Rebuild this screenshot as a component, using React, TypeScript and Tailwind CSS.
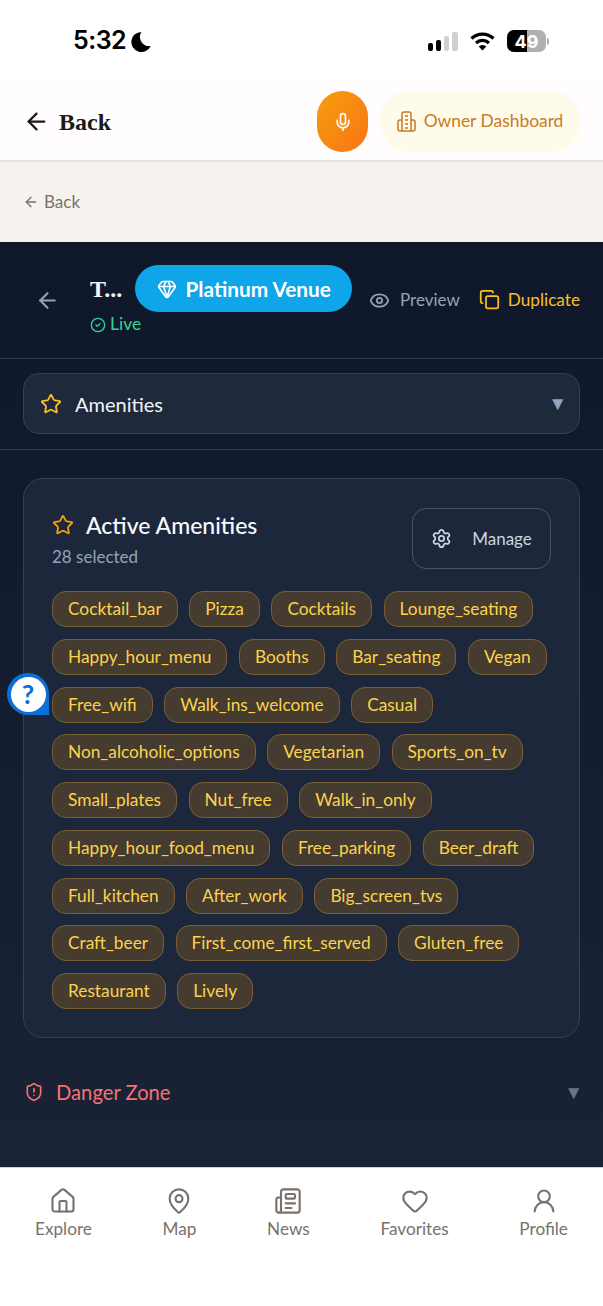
import { ArrowLeft, Mic, Gem, CircleCheck, Eye, Copy, Star, Settings, ShieldAlert, House, MapPin, Newspaper, Heart, UserRound } from 'lucide-react';

const amenities = [
  'Cocktail_bar', 'Pizza', 'Cocktails', 'Lounge_seating', 'Happy_hour_menu', 'Booths', 'Bar_seating', 'Vegan',
  'Free_wifi', 'Walk_ins_welcome', 'Casual', 'Non_alcoholic_options', 'Vegetarian', 'Sports_on_tv',
  'Small_plates', 'Nut_free', 'Walk_in_only', 'Happy_hour_food_menu', 'Free_parking', 'Beer_draft',
  'Full_kitchen', 'After_work', 'Big_screen_tvs', 'Craft_beer', 'First_come_first_served', 'Gluten_free',
  'Restaurant', 'Lively',
];

const navItems = [
  { label: 'Explore', icon: House },
  { label: 'Map', icon: MapPin },
  { label: 'News', icon: Newspaper },
  { label: 'Favorites', icon: Heart },
  { label: 'Profile', icon: UserRound },
];

function StatusBar() {
  return (
    <div className="h-[81px] bg-white flex items-center justify-between pl-[73px] pr-[54px] pt-[1px] font-['Inter',sans-serif]">
      <div className="flex items-center gap-[4px]">
        <span className="text-[25px] font-semibold text-black tracking-[-0.5px]">5:32</span>
        <svg width="21" height="21" viewBox="0 0 24 24" fill="#000">
          <path d="M13 1a11.5 11.5 0 1 0 10.6 16A10.5 10.5 0 0 1 13 1z" />
        </svg>
      </div>
      <div className="flex items-center gap-[11px]">
        <div className="flex items-end gap-[3px] h-[19px]">
          <div className="w-[5px] h-[8px] rounded-[2px] bg-black" />
          <div className="w-[5px] h-[11px] rounded-[2px] bg-black" />
          <div className="w-[5px] h-[15px] rounded-[2px] bg-[#d0d0d0]" />
          <div className="w-[6px] h-[19px] rounded-[2px] bg-[#d0d0d0]" />
        </div>
        <svg width="27" height="20" viewBox="0 0 26 20" fill="none" stroke="#000" strokeWidth="3.2">
          <path d="M2 7.5a16 16 0 0 1 22 0" />
          <path d="M6.5 12a9.5 9.5 0 0 1 13 0" />
          <path d="M13 19.5l-3.8-4a5.4 5.4 0 0 1 7.6 0z" fill="#000" stroke="none" />
        </svg>
        <div className="flex items-center gap-[1px]">
          <div className="relative w-[39px] h-[22px] rounded-[7px] bg-[#b0b0b0] overflow-hidden flex items-center justify-center">
            <div className="absolute left-0 top-0 bottom-0 w-[20px] bg-black" />
            <span className="relative text-[18px] font-bold text-white">49</span>
          </div>
          <div className="w-[2px] h-[7px] rounded-r-[2px] bg-[#b0b0b0]" />
        </div>
      </div>
    </div>
  );
}

export default function App() {
  return (
    <div className="relative w-[603px] h-[1306px] overflow-hidden flex flex-col bg-white font-['Lato',sans-serif]">
      <StatusBar />

      <div className="h-[81px] bg-[#fffdfd] border-b-2 border-[#e8e4e0] flex items-center pl-[23px] pr-[22px] pt-[2px]">
        <ArrowLeft size={27} strokeWidth={2} className="text-[#1c1917]" />
        <span className="ml-[9px] text-[24px] font-bold text-[#1c1917] font-['Liberation_Serif',serif]">Back</span>
        <div className="ml-auto flex items-center gap-[11px]">
          <div className="w-[51px] h-[61px] rounded-full bg-gradient-to-br from-[#f59e0b] to-[#f97316] flex items-center justify-center">
            <Mic size={20} className="text-white" />
          </div>
          <div className="w-[202px] h-[61px] rounded-full bg-[#fefbeb] flex items-center justify-center gap-[8px] text-[#c97a25]">
            <svg width="19" height="21" viewBox="0 0 19 21" fill="none" stroke="currentColor" strokeWidth="1.5" strokeLinejoin="round">
              <path d="M5 20V3a2 2 0 0 1 2-2h5a2 2 0 0 1 2 2v17" />
              <path d="M5 9H3a2 2 0 0 0-2 2v7a2 2 0 0 0 2 2h13a2 2 0 0 0 2-2v-7a2 2 0 0 0-2-2h-2" />
              <path d="M8 5h3M8 9h3M8 13h3M8 17h3" />
            </svg>
            <span className="text-[17.4px]">Owner Dashboard</span>
          </div>
        </div>
      </div>

      <div className="h-[80px] bg-[#f6f3ef] flex items-center pl-[23px] gap-[5px] text-[#78716c]">
        <ArrowLeft size={16} />
        <span className="text-[17px]">Back</span>
      </div>

      <div className="flex-1 flex flex-col bg-gradient-to-b from-[#0f172a] to-[#1a2236]">
        <div className="h-[117px] border-b border-[#334155] flex items-center pl-[35px] pr-[23px]">
          <ArrowLeft size={25} className="text-[#94a3b8]" />
          <div className="ml-[30px] pt-[3px] flex flex-col">
            <div className="flex items-center gap-[13px]">
              <span className="text-[24px] font-bold text-[#f1f5f9] font-['Liberation_Serif',serif]">T...</span>
              <div className="h-[47px] w-[217px] rounded-full bg-[#0ea5e9] flex items-center justify-center gap-[9px] text-white">
                <Gem size={20} />
                <span className="text-[20.8px] font-bold">Platinum Venue</span>
              </div>
            </div>
            <div className="flex items-center gap-[4px] mt-[-1px] text-[#34d399]">
              <CircleCheck size={16} />
              <span className="text-[17.5px]">Live</span>
            </div>
          </div>
          <div className="ml-auto flex items-center gap-[10px] text-[#94a3b8]">
            <Eye size={21} />
            <span className="text-[17px]">Preview</span>
          </div>
          <div className="ml-[19px] flex items-center gap-[8px] text-[#fbbf24]">
            <Copy size={21} />
            <span className="text-[17.2px]">Duplicate</span>
          </div>
        </div>

        <div className="h-[91px] border-b border-[#334155] px-[23px] pt-[14px]">
          <div className="w-full h-[61px] rounded-[16px] bg-[#1e293b] border border-[#334155] flex items-center px-[16px]">
            <Star size={22} className="text-[#fbbf24]" />
            <span className="ml-[13px] text-[20px] text-[#f1f5f9]">Amenities</span>
            <span className="ml-auto mr-[-4px] text-[19px] text-[#94a3b8]">▼</span>
          </div>
        </div>

        <div className="px-[23px] pt-[28px]">
          <div className="h-[560px] rounded-[20px] bg-[#1c273c] border border-[#334155] px-[28px] pt-[29px]">
            <div className="flex items-start justify-between">
              <div>
                <div className="flex items-center gap-[12px]">
                  <Star size={22} className="text-[#f59e0b]" />
                  <span className="text-[23px] font-medium text-[#f8fafc]">Active Amenities</span>
                </div>
                <p className="mt-[1px] text-[17px] text-[#94a3b8]">28 selected</p>
              </div>
              <div className="w-[139px] h-[61px] rounded-[14px] border border-[#475569] flex items-center justify-center gap-[20px] text-[#cbd5e1]">
                <Settings size={21} />
                <span className="text-[17px]">Manage</span>
              </div>
            </div>
            <div className="mt-[22px] flex flex-wrap gap-x-[11.5px] gap-y-[11.75px]">
              {amenities.map((a) => (
                <span
                  key={a}
                  className="h-[36px] px-[15px] rounded-[14px] bg-[#453b2f] border border-[#7a5f35] flex items-center text-[17.3px] text-[#fcd34d]"
                >
                  {a}
                </span>
              ))}
            </div>
          </div>
        </div>

        <div className="mt-[39px] px-[24px] flex items-center">
          <ShieldAlert size={20} className="text-[#f87171]" />
          <span className="ml-[12px] text-[20.2px] text-[#f87171]">Danger Zone</span>
          <span className="ml-auto mr-[-4px] text-[19px] text-[#64748b]">▼</span>
        </div>
      </div>

      <div className="h-[139px] bg-white border-t border-[#d6d3d1] flex items-start justify-between px-[35px] pt-[19px]">
        {navItems.map(({ label, icon: Icon }) => (
          <div key={label} className="flex flex-col items-center gap-[1px] text-[#78716c]">
            <Icon size={28} strokeWidth={1.8} />
            <span className="text-[17.2px]">{label}</span>
          </div>
        ))}
      </div>

      {/* floating help */}
      <div className="absolute left-[7px] top-[673px] w-[42px] h-[42px] rounded-full rounded-br-[3px] bg-[#0b6fd8] flex items-center justify-center">
        <div className="w-[35px] h-[35px] rounded-full bg-white flex items-center justify-center text-[27px] font-bold text-[#0b6fd8]">?</div>
      </div>
    </div>
  );
}
